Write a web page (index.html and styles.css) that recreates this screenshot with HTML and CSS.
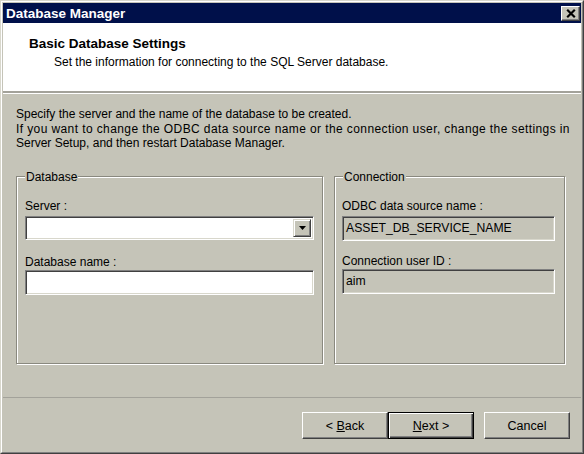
FILE: index.html
```html
<!DOCTYPE html>
<html>
<head>
<meta charset="utf-8">
<link rel="stylesheet" href="styles.css">
</head>
<body>
<div class="window">
  <div class="frame">
    <div class="titlebar">
      <span class="title">Database Manager</span>
      <span class="close-btn"><svg width="10" height="9" viewBox="0 0 10 9"><path d="M1.2 0.8L8.8 8.2M8.8 0.8L1.2 8.2" stroke="#000" stroke-width="2.2" fill="none"/></svg></span>
    </div>
    <div class="header">
      <div class="h-title">Basic Database Settings</div>
      <div class="h-sub">Set the information for connecting to the SQL Server database.</div>
    </div>
    <div class="body">
      <p class="intro"><span class="l1">Specify the server and the name of the database to be created.</span><br><span class="l2">If you want to change the ODBC data source name or the connection user, change the settings in</span><br><span class="l3">Server Setup, and then restart Database Manager.</span></p>
      <div class="groups">
        <fieldset class="group group-db">
          <legend>Database</legend>
          <div class="lbl">Server :</div>
          <div class="field combo"><span class="drop-btn"><svg width="7" height="4" viewBox="0 0 7 4"><path d="M0 0h7L3.5 4z" fill="#000"/></svg></span></div>
          <div class="lbl lbl2">Database name :</div>
          <div class="field input"></div>
        </fieldset>
        <fieldset class="group group-conn">
          <legend>Connection</legend>
          <div class="lbl">ODBC data source name :</div>
          <div class="field ro">ASSET_DB_SERVICE_NAME</div>
          <div class="lbl lbl2 lbl2-ro">Connection user ID :</div>
          <div class="field ro">aim</div>
        </fieldset>
      </div>
    </div>
    <div class="footer">
      <div class="btn"><span>&lt; <u>B</u>ack</span></div>
      <div class="btn default"><span><u>N</u>ext &gt;</span></div>
      <div class="btn cancel"><span>Cancel</span></div>
    </div>
  </div>
</div>
</body>
</html>
```

FILE: styles.css
```css
html, body {
  margin: 0;
  padding: 0;
}
body {
  width: 584px;
  height: 454px;
  font-family: "Liberation Sans", Arial, sans-serif;
  font-size: 12px;
  color: #000;
  background: #c5c4b8;
}
.window {
  width: 584px;
  height: 454px;
  box-sizing: border-box;
  border: 1px solid;
  border-color: #d8d7cc #404040 #404040 #d8d7cc;
}
.frame {
  height: 100%;
  box-sizing: border-box;
  border: 1px solid;
  border-color: #ffffff #808080 #808080 #ffffff;
  padding: 1px;
  display: flex;
  flex-direction: column;
  background: #c5c4b8;
}
.titlebar {
  height: 20px;
  flex: none;
  background: #00104a;
  display: flex;
  align-items: center;
  justify-content: space-between;
  padding: 0 1px 0 3px;
}
.title {
  color: #fff;
  font-weight: bold;
  font-size: 13.5px;
}
.close-btn {
  width: 19px;
  height: 15px;
  box-sizing: border-box;
  background: #c5c4b8;
  border: 1px solid;
  border-color: #ffffff #404040 #404040 #ffffff;
  box-shadow: inset -1px -1px 0 #808080;
  display: flex;
  align-items: center;
  justify-content: center;
}
.close-btn svg {
  width: 10px;
  height: 9px;
}
.header {
  height: 70px;
  flex: none;
  background: #fff;
  border-bottom: 2px solid #a3a29a;
  box-sizing: border-box;
  padding-top: 13px;
}
.h-title {
  font-weight: bold;
  font-size: 13.5px;
  margin-left: 26px;
  line-height: 16px;
}
.h-sub {
  margin-left: 51px;
  margin-top: 2px;
  line-height: 16px;
}
.body {
  flex: none;
  height: 305px;
  padding: 13px 8px 0 13px;
  box-sizing: border-box;
  border-top: 1px solid #fff;
  border-bottom: 1px solid #a3a29a;
}
.intro {
  margin: 0;
  line-height: 14.5px;
  white-space: nowrap;
}
.l2 {
  letter-spacing: 0.4px;
}
.groups {
  display: flex;
  gap: 11px;
  margin-top: 19px;
}
.group {
  margin: 0;
  height: 194px;
  box-sizing: border-box;
  border: 1px solid #8a897f;
  box-shadow: inset 1px 1px 0 #fff, 1px 1px 0 #fff;
  padding: 0 8px 0 8px;
  min-width: 0;
  flex: none;
}
.group-db {
  width: 307px;
}
.group-conn {
  width: 231px;
  padding: 0 9px 0 7px;
}
.group legend {
  padding: 0 1px;
  margin-left: 0;
  background: #c5c4b8;
  line-height: 14px;
}
.group-conn legend {
  margin-left: 1px;
}
.lbl {
  line-height: 14px;
  margin-top: 15px;
  margin-bottom: 3px;
}
.lbl2 {
  margin-top: 15px;
  margin-bottom: 1px;
}
.lbl2-ro {
  margin-top: 13px;
}
.field {
  height: 24px;
  box-sizing: border-box;
  border: 1px solid;
  border-color: #808080 #ffffff #ffffff #808080;
  box-shadow: inset 1px 1px 0 #404040, inset -1px -1px 0 #d8d7cc;
  background: #fff;
}
.input {
  height: 25px;
}
.combo {
  display: flex;
  justify-content: flex-end;
  padding: 2px;
}
.drop-btn {
  width: 18px;
  height: 18px;
  box-sizing: border-box;
  background: #c5c4b8;
  border: 1px solid;
  border-color: #d8d7cc #404040 #404040 #d8d7cc;
  box-shadow: inset 1px 1px 0 #fff, inset -1px -1px 0 #808080;
  display: flex;
  align-items: center;
  justify-content: center;
}
.ro {
  background: #c5c4b8;
  height: 25px;
  line-height: 23px;
  padding-left: 3px;
  font-size: 12.2px;
}
.footer {
  flex: 1;
  display: flex;
  justify-content: flex-end;
  align-items: flex-start;
  padding: 14px 11px 0 0;
}
.btn {
  width: 86px;
  height: 27px;
  box-sizing: border-box;
  border: 1px solid;
  border-color: #ffffff #404040 #404040 #ffffff;
  box-shadow: inset -1px -1px 0 #808080;
  display: flex;
  align-items: center;
  justify-content: center;
  font-size: 12.5px;
}
.btn.default {
  border: 1px solid #000;
  box-shadow: inset 1px 1px 0 #fff, inset -1px -1px 0 #404040, inset -2px -2px 0 #808080;
}
.btn.cancel {
  margin-left: 10px;
}
.btn u {
  text-decoration: underline;
  text-underline-offset: 1px;
}
```
